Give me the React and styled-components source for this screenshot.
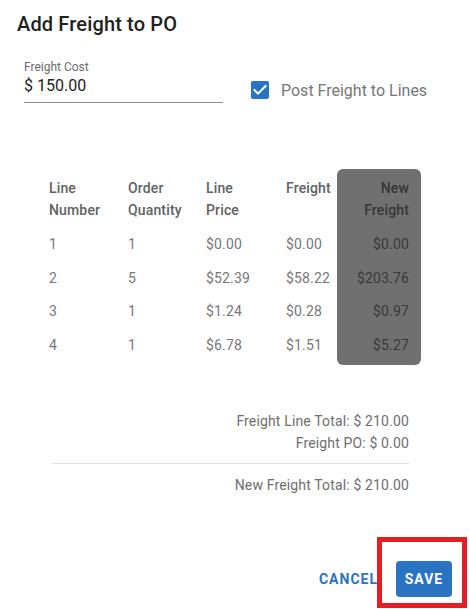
import React from "react";
import styled, { createGlobalStyle } from "styled-components";

const Global = createGlobalStyle`
  html, body { margin: 0; padding: 0; background: #fff; }
  body { font-family: Roboto, "Liberation Sans", Arial, sans-serif; }
  * { box-sizing: border-box; }
`;

const Dialog = styled.div`
  position: relative;
  width: 469px;
  height: 609px;
  overflow: hidden;
  display: flex;
  flex-direction: column;
  background: #fff;
`;

const Title = styled.h2`
  margin: 0;
  padding: 8px 0 0 17px;
  font-size: 20px;
  line-height: 32px;
  font-weight: 500;
  letter-spacing: 0.15px;
  color: #212121;
`;

const FormRow = styled.div`
  display: flex;
  align-items: flex-start;
  margin-top: 20px;
  padding-left: 24px;
`;

const Field = styled.div`
  width: 199px;
  display: flex;
  flex-direction: column;
`;

const FieldLabel = styled.label`
  font-size: 12px;
  line-height: 14px;
  color: #6b6b6b;
`;

const FieldValue = styled.div`
  margin-top: 2px;
  font-size: 16px;
  line-height: 19px;
  color: #222;
  padding-bottom: 7px;
  border-bottom: 1px solid #8e8e8e;
`;

const CheckGroup = styled.label`
  display: flex;
  align-items: center;
  gap: 9px;
  height: 24px;
  margin-left: 25px;
  margin-top: 18px;
  font-size: 16px;
  color: #777;
`;

const Table = styled.div`
  display: flex;
  margin-top: 66px;
  margin-left: 37px;
`;

const Column = styled.div`
  width: ${(p) => p.$w}px;
  display: flex;
  flex-direction: column;
  padding-left: ${(p) => (p.$hl ? 0 : 12)}px;
  padding-right: ${(p) => (p.$hl ? 12 : 0)}px;
  padding-bottom: ${(p) => (p.$hl ? 3 : 0)}px;
  text-align: ${(p) => (p.$hl ? "right" : "left")};
  background: ${(p) => (p.$hl ? "#707070" : "transparent")};
  border-radius: ${(p) => (p.$hl ? 6 : 0)}px;
`;

const HeadCell = styled.div`
  height: 59px;
  padding-top: 8px;
  font-size: 14px;
  line-height: 22px;
  font-weight: 500;
  letter-spacing: 0.15px;
  color: ${(p) => (p.$hl ? "#353535" : "#616161")};
`;

const Cell = styled.div`
  height: 33.5px;
  line-height: 33.5px;
  font-size: 14px;
  letter-spacing: 0.15px;
  white-space: nowrap;
  color: ${(p) => (p.$hl ? "#383838" : "#777")};
`;

const Totals = styled.div`
  margin-top: 46px;
  margin-left: 52px;
  width: 357px;
  display: flex;
  flex-direction: column;
  align-items: flex-end;
`;

const TotalLine = styled.div`
  font-size: 14px;
  line-height: 21.5px;
  letter-spacing: 0.15px;
  color: #6e6e6e;
`;

const Divider = styled.hr`
  align-self: stretch;
  border: 0;
  border-top: 1px solid #e0e0e0;
  margin: 9px 0 11px;
`;

const Actions = styled.div`
  display: flex;
  justify-content: flex-end;
  align-items: center;
  margin-top: 64px;
  padding-right: 17px;
`;

const TextButton = styled.button`
  border: 0;
  background: transparent;
  font-family: inherit;
  font-size: 14px;
  font-weight: 700;
  letter-spacing: 1px;
  color: #2b73c3;
  padding: 0 8px;
  height: 36px;
  margin-right: 10px;
  cursor: pointer;
`;

const PrimaryButton = styled.button`
  border: 0;
  border-radius: 4px;
  background: #2a73c3;
  color: #fff;
  font-family: inherit;
  font-size: 14px;
  font-weight: 700;
  letter-spacing: 1px;
  height: 36px;
  width: 56px;
  padding: 0;
  cursor: pointer;
`;

const Highlight = styled.div`
  position: absolute;
  left: 377px;
  top: 537px;
  width: 90px;
  height: 71px;
  border: 5px solid #e31e25;
  pointer-events: none;
`;

const CheckIcon = () => (
  <svg width="24" height="24" viewBox="0 0 24 24">
    <path
      fill="#2a73c3"
      d="M19 3H5c-1.11 0-2 .9-2 2v14c0 1.1.89 2 2 2h14c1.11 0 2-.9 2-2V5c0-1.1-.89-2-2-2zm-9 14l-5-5 1.41-1.41L10 14.17l7.59-7.59L19 8l-9 9z"
    />
  </svg>
);

const columns = [
  { key: "line", head: ["Line", "Number"], w: 79 },
  { key: "qty", head: ["Order", "Quantity"], w: 78 },
  { key: "price", head: ["Line", "Price"], w: 80 },
  { key: "freight", head: ["Freight", ""], w: 63 },
  { key: "newFreight", head: ["New", "Freight"], w: 84, hl: true },
];

const rows = [
  { line: "1", qty: "1", price: "$0.00", freight: "$0.00", newFreight: "$0.00" },
  { line: "2", qty: "5", price: "$52.39", freight: "$58.22", newFreight: "$203.76" },
  { line: "3", qty: "1", price: "$1.24", freight: "$0.28", newFreight: "$0.97" },
  { line: "4", qty: "1", price: "$6.78", freight: "$1.51", newFreight: "$5.27" },
];

export default function App() {
  return (
    <>
      <Global />
      <Dialog>
        <Title>Add Freight to PO</Title>
        <FormRow>
          <Field>
            <FieldLabel>Freight Cost</FieldLabel>
            <FieldValue>$ 150.00</FieldValue>
          </Field>
          <CheckGroup>
            <CheckIcon />
            Post Freight to Lines
          </CheckGroup>
        </FormRow>
        <Table>
          {columns.map((c) => (
            <Column key={c.key} $w={c.w} $hl={c.hl}>
              <HeadCell $hl={c.hl}>
                {c.head[0]}
                <br />
                {c.head[1]}
              </HeadCell>
              {rows.map((r, i) => (
                <Cell key={i} $hl={c.hl}>
                  {r[c.key]}
                </Cell>
              ))}
            </Column>
          ))}
        </Table>
        <Totals>
          <TotalLine>Freight Line Total: $ 210.00</TotalLine>
          <TotalLine>Freight PO: $ 0.00</TotalLine>
          <Divider />
          <TotalLine>New Freight Total: $ 210.00</TotalLine>
        </Totals>
        <Actions>
          <TextButton>CANCEL</TextButton>
          <PrimaryButton>SAVE</PrimaryButton>
        </Actions>
        <Highlight />
      </Dialog>
    </>
  );
}
